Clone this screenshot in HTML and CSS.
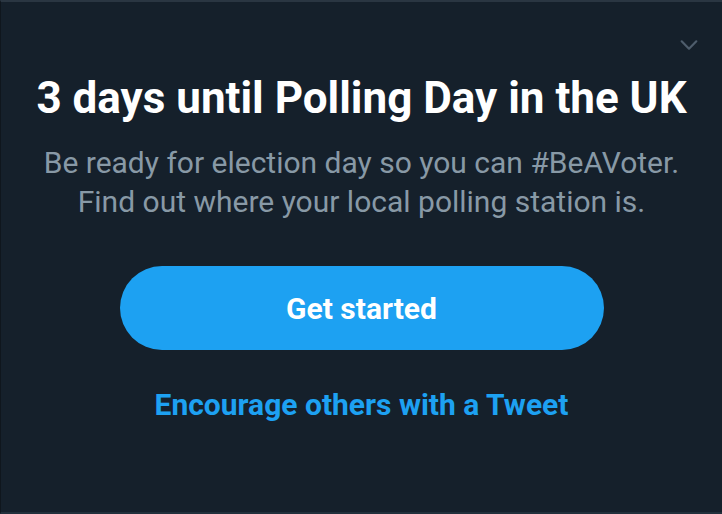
FILE: index.html
```html
<!DOCTYPE html>
<html lang="en">
<head>
  <meta charset="UTF-8" />
  <title>Polling Day</title>
  <link rel="stylesheet" href="styles.css">
</head>
<body>
  <div class="card">
    <button class="dismiss" aria-label="Dismiss">
      <svg viewBox="0 0 24 24" width="22" height="22"><path d="M4 8l8 8 8-8" fill="none" stroke="currentColor" stroke-width="2.4" stroke-linecap="round" stroke-linejoin="round"/></svg>
    </button>
    <h1>3 days until Polling Day in the UK</h1>
    <p class="subtitle">Be ready for election day so you can #BeAVoter.<br>Find out where your local polling station is.</p>
    <a class="btn" href="#">Get started</a>
    <a class="link" href="#">Encourage others with a Tweet</a>
  </div>
</body>
</html>
```

FILE: styles.css
```css
* {
  margin: 0;
  padding: 0;
  box-sizing: border-box;
}

body {
  font-family: Roboto, 'Liberation Sans', sans-serif;
  background: #15202b;
  width: 722px;
  height: 514px;
  overflow: hidden;
}

.card {
  position: relative;
  height: 514px;
  background: #15202b;
  border-top: 2px solid #2a3642;
  border-left: 1px solid #0f161d;
  border-bottom: 2px solid #22303c;
  display: flex;
  flex-direction: column;
  align-items: center;
  padding-top: 70px;
}

.dismiss {
  position: absolute;
  top: 32px;
  right: 22px;
  background: none;
  border: none;
  color: #4e5d6c;
}

h1 {
  color: #fff;
  font-size: 44px;
  font-weight: 700;
  line-height: 52px;
  white-space: nowrap;
}

.subtitle {
  color: #8899a6;
  font-size: 30px;
  line-height: 39px;
  text-align: center;
  margin-top: 19px;
  white-space: nowrap;
}

.btn {
  display: flex;
  align-items: center;
  justify-content: center;
  width: 484px;
  height: 84px;
  margin-top: 45px;
  border-radius: 42px;
  background: #1da1f2;
  color: #fff;
  font-size: 30px;
  font-weight: 700;
  text-decoration: none;
}

.link {
  margin-top: 37px;
  color: #1da1f2;
  font-size: 30px;
  font-weight: 700;
  line-height: 36px;
  text-decoration: none;
}
```
